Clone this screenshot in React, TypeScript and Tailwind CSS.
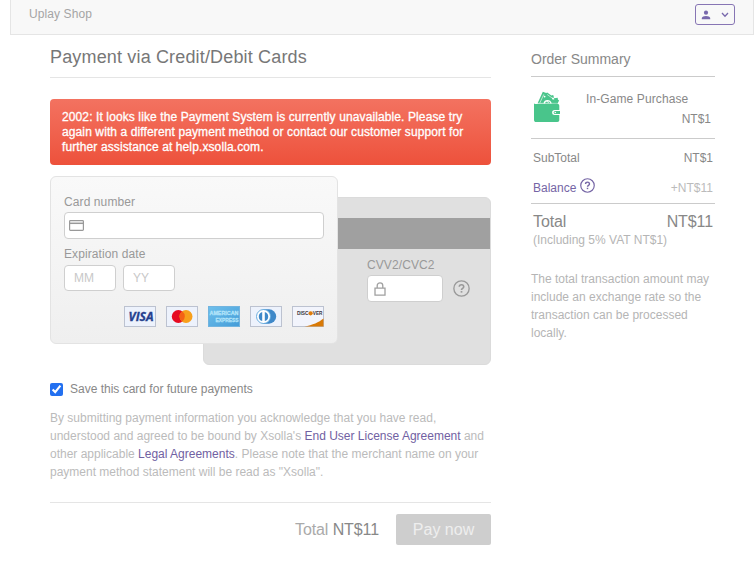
import React, { useState } from "react";

interface IconProps {
  className?: string;
}

interface FieldProps {
  placeholder?: string;
  label: string;
  className: string;
}

const HelpIcon: React.FC<IconProps> = ({ className }) => (
  <svg viewBox="0 0 16 16" fill="none" stroke="currentColor" className={className}>
    <circle cx="8" cy="8" r="7.2" strokeWidth="1.25" />
    <path d="M5.9 6.4c0-2.7 4.2-2.6 4.2 0 0 1.5-2.1 1.5-2.1 3" strokeWidth="1.5" />
    <path d="M8 10.4v1.5" strokeWidth="1.6" />
  </svg>
);

const WalletIcon = () => (
  <svg viewBox="0 0 27 32" className="h-8 w-[27px] text-[#49c58b]" fill="currentColor">
    <path d="M3.5 12.5 8.8.8l3.4 1.3 1-.7 4.2 3.1 1.8-.5 1 3.2 3.5-.4.2 1.8 1.2 1-1.8 3.4z" />
    <path d="m5.800 12 4-8.600M13.200 3.500l7 5" stroke="#fff" strokeWidth=".6" fill="none" />
    <circle cx="10.600" cy="5.600" r=".9" fill="#fff" />
    <circle cx="19" cy="7.600" r="1" fill="#fff" />
    <path d="M9.500 12.500c.4-4.700 7.500-4.300 8.200 0" fill="#fff" />
    <path d="M11 12.500c.5-3 4.900-2.900 5.300 0" />
    <path d="m12.400 10.200 2.500 1.200" stroke="#fff" strokeWidth="1" />
    <path d="M0 12.300c.4.600 1 .800 1.800.800h21.700c1.200 0 1.800.600 1.800 1.800v4.200h-4.500c-2 0-2.700 1-2.700 2.300 0 1.700 1 2.500 2.700 2.500h4.500v5.200c0 1.300-.7 2-2 2H2.200C.8 31.100 0 30.300 0 29z" />
    <path d="M21.200 20H26v3h-4.800a1.500 1.500 0 0 1 0-3z" />
    <circle cx="21.300" cy="21.500" r=".8" fill="#fff" />
    <path d="M2.500 12.300h20.800" stroke="#fff" strokeWidth=".4" />
  </svg>
);

const brandClass = "h-[21px] w-8";

const Visa = () => (
  <svg viewBox="0 0 32 21" className={brandClass}>
    <rect x=".5" y=".5" width="31" height="20" fill="#edf2fc" stroke="#bcc2d0" />
    <text
      x="4.500"
      y="14.800"
      fontSize="11.500"
      fontWeight="bold"
      fontStyle="italic"
      textLength="25"
      lengthAdjust="spacingAndGlyphs"
      fill="#24408e"
      stroke="#24408e"
      strokeWidth=".3"
      fontFamily="Open Sans, sans-serif"
    >
      VISA
    </text>
  </svg>
);

const Mastercard = () => (
  <svg viewBox="0 0 32 21" className={brandClass}>
    <rect x=".5" y=".5" width="31" height="20" fill="#edf2fc" stroke="#bcc2d0" />
    <circle cx="12.300" cy="10.500" r="6.500" fill="#e60b22" />
    <circle cx="20" cy="10.500" r="6.500" fill="#f79f1b" />
    <path d="M16.150 5.260a6.500 6.500 0 0 1 0 10.480 6.500 6.500 0 0 1 0-10.480z" fill="#f46215" />
  </svg>
);

const Amex = () => (
  <svg viewBox="0 0 32 21" className={brandClass}>
    <defs>
      <linearGradient id="amex" x1="0" y1="0" x2="1" y2="1">
        <stop stopColor="#6fc0ec" />
        <stop offset="1" stopColor="#449cd8" />
      </linearGradient>
    </defs>
    <rect x=".5" y=".5" width="31" height="20" fill="url(#amex)" stroke="#72b4df" />
    <g fill="#b4e5fa" stroke="#b4e5fa" strokeWidth=".3" fontFamily="Liberation Sans, sans-serif" fontWeight="bold" fontSize="6">
      <text x="1.500" y="8.500" textLength="29" lengthAdjust="spacingAndGlyphs">AMERICAN</text>
      <text x="7.500" y="15.500" textLength="23" lengthAdjust="spacingAndGlyphs">EXPRESS</text>
    </g>
  </svg>
);

const Diners = () => (
  <svg viewBox="0 0 32 21" className={brandClass}>
    <rect x=".5" y=".5" width="31" height="20" fill="#edf2fc" stroke="#bcc2d0" />
    <path d="M13 3.300h6a7.200 7.200 0 0 1 0 14.400h-6z" fill="#3e88c9" />
    <circle cx="13.500" cy="10.500" r="7" fill="#fff" stroke="#5ba5da" strokeWidth=".9" />
    <path d="M12.200 5.900a4.800 4.800 0 0 0 0 9.200zM14.800 5.900a4.800 4.800 0 0 1 0 9.200z" fill="#3e88c9" />
  </svg>
);

const Discover = () => (
  <svg viewBox="0 0 32 21" className={brandClass}>
    <rect x=".5" y=".5" width="31" height="20" fill="#f2f4fc" stroke="#bcc2d0" />
    <path d="M31.500 12.500v8H12.300c8.500-1.300 14.500-4.300 19.200-8z" fill="#d87906" />
    <g fill="#38343a" fontFamily="Liberation Sans, sans-serif" fontWeight="bold" fontSize="5.500">
      <text x="5" y="9.300" textLength="11.500" lengthAdjust="spacingAndGlyphs">DISC</text>
      <text x="20.800" y="9.300" textLength="9.700" lengthAdjust="spacingAndGlyphs">VER</text>
    </g>
    <circle cx="18.600" cy="7.300" r="2.100" fill="#df7c0b" />
  </svg>
);

const Field: React.FC<FieldProps> = ({ placeholder, label, className }) => (
  <input
    aria-label={label}
    placeholder={placeholder}
    className={`rounded-[4px] border border-[#cfcfcf] bg-white text-[#777] placeholder:text-[#c8c8c8] ${className}`}
  />
);

const Header = () => (
  <header className="ml-2.5 flex h-[35px] items-start justify-between border-x border-b border-[#e5e5e5] bg-[#f8f8f8] px-[18px]">
    <span className="pt-1.5 leading-4 tracking-[0.1px] text-[#a5a5a5]">Uplay Shop</span>
    <button className="mt-1 flex h-[21px] w-10 items-center justify-between rounded-[3px] border border-[#8775b4] px-[5px] text-[#7868ac]">
      <svg viewBox="0 0 10 10" className="size-2.5" fill="currentColor">
        <circle cx="5" cy="2.700" r="2.100" />
        <path d="M.8 9.300V8.100c0-2.900 8.400-2.900 8.400 0v1.200z" />
      </svg>
      <svg viewBox="0 0 8 8" className="size-2" fill="none" stroke="currentColor" strokeWidth="1.300">
        <path d="m1 2 3 3.200L7 2" />
      </svg>
    </button>
  </header>
);

const CardForm = () => (
  <div className="mt-[11px] grid h-[189px]">
    <div className="col-start-1 row-start-1 mt-[21px] ml-[153px] h-42 rounded-[6px] border border-[#dbdbdb] bg-[#e0e0e0] pt-5">
      <div className="h-[31px] bg-[#a0a0a0]" />
      <div className="pt-2 pl-[163px]">
        <p className="leading-4 tracking-[0.1px] text-[#999]">CVV2/CVC2</p>
        <div className="mt-0.5 flex items-center gap-2.5">
          <div className="grid items-center">
            <Field label="CVV2/CVC2" className="col-start-1 row-start-1 h-[27px] w-[76px] pl-7" />
            <svg viewBox="0 0 12 14" className="col-start-1 row-start-1 ml-[7px] h-3.5 w-3" fill="none" stroke="#a0a0a0" strokeWidth="1.300">
              <path d="M1 6.200h10v7H1zM3.200 6V3.700a2.800 2.800 0 0 1 5.600 0V6" />
            </svg>
          </div>
          <HelpIcon className="size-[17px] text-[#999]" />
        </div>
      </div>
    </div>
    <div className="z-10 col-start-1 row-start-1 h-42 w-72 rounded-[6px] border border-[#e3e3e3] bg-linear-to-b from-[#f9f9f9] to-[#efefef] px-[13px] pt-[17px]">
      <p className="leading-4 tracking-[0.1px] text-[#999]">Card number</p>
      <div className="mt-0.5 grid items-center">
        <Field label="Card number" className="col-start-1 row-start-1 h-[27px] w-[260px] pl-7" />
        <svg viewBox="0 0 15 11" className="col-start-1 row-start-1 ml-[5px] h-[11px] w-[15px]" fill="none" stroke="#999" strokeWidth="1.200">
          <rect x=".6" y=".6" width="13.800" height="9.800" rx=".8" />
          <path d="M.6 3.300h13.800" strokeWidth="1.500" />
        </svg>
      </div>
      <p className="mt-[7px] leading-4 tracking-[0.1px] text-[#999]">Expiration date</p>
      <div className="mt-[3px] flex gap-[7px]">
        <Field label="Month" placeholder="MM" className="h-[26px] w-[52px] pl-[9px]" />
        <Field label="Year" placeholder="YY" className="h-[26px] w-[52px] pl-[9px]" />
      </div>
      <div className="mt-[15px] flex justify-end gap-2.5">
        <Visa />
        <Mastercard />
        <Amex />
        <Diners />
        <Discover />
      </div>
    </div>
  </div>
);

const OrderSummary = () => (
  <aside className="w-[184px] pt-4 text-[#888]">
    <h2 className="h-[26px] border-b border-[#cbcbcb] text-sm leading-4">Order Summary</h2>
    <div className="flex h-[62px] border-b border-[#cbcbcb] pt-3.5 pl-[3px]">
      <WalletIcon />
      <div className="flex grow flex-col pl-[25px] leading-4">
        <span className="tracking-[0.1px]">In-Game Purchase</span>
        <span className="mt-1 pr-1 text-right">NT$1</span>
      </div>
    </div>
    <div className="h-[65px] border-b border-[#cbcbcb] px-0.5 pt-[11px] leading-4">
      <div className="flex justify-between">
        <span>SubTotal</span>
        <span>NT$1</span>
      </div>
      <div className="mt-3.5 flex justify-between">
        <span className="flex text-[#7565a5]">
          Balance
          <HelpIcon className="-mt-0.5 ml-1 size-[15px]" />
        </span>
        <span className="text-[#bbb]">+NT$11</span>
      </div>
    </div>
    <div className="flex justify-between px-0.5 pt-2 text-base leading-5 tracking-[-0.1px]">
      <span>Total</span>
      <span>NT$11</span>
    </div>
    <p className="pl-0.5 leading-4 text-[#b5b5b5]">(Including 5% VAT NT$1)</p>
    <p className="mt-[22px] leading-[18px] text-[#b5b5b5]">
      The total transaction amount may
      <br />
      include an exchange rate so the
      <br />
      transaction can be processed
      <br />
      locally.
    </p>
  </aside>
);

export default function App() {
  const [saveCard, setSaveCard] = useState(true);

  return (
    <div className="h-[571px] overflow-hidden bg-white font-['Liberation_Sans',Arial,sans-serif] text-xs whitespace-nowrap">
      <Header />
      <div className="flex gap-10 pl-[50px]">
        <main className="w-[441px]">
          <h1 className="h-[43px] border-b border-[#e5e5e5] pt-3 text-lg leading-5 tracking-[0.16px] text-[#777]">
            Payment via Credit/Debit Cards
          </h1>
          <div className="mt-[21px] h-[66px] rounded-[4px] bg-linear-to-b from-[#f37260] to-[#ed513b] pt-[11px] pl-3 leading-[15px] tracking-[0.11px] text-white [-webkit-text-stroke:0.3px]">
            2002: It looks like the Payment System is currently unavailable. Please try
            <br />
            again with a different payment method or contact our customer support for
            <br />
            further assistance at help.xsolla.com.
          </div>
          <CardForm />
          <label className="mt-4 flex items-center gap-[7px] leading-4 text-[#888]">
            <input
              type="checkbox"
              checked={saveCard}
              onChange={(e) => setSaveCard(e.target.checked)}
              className="size-[13px] accent-[#2370f0]"
            />
            Save this card for future payments
          </label>
          <p className="mt-3 h-[94px] border-b border-[#e5e5e5] leading-[18px] text-[#bbb]">
            By submitting payment information you acknowledge that you have read,
            <br />
            understood and agreed to be bound by Xsolla's{" "}
            <a className="text-[#7161a2]">End User License Agreement</a> and
            <br />
            other applicable <a className="text-[#7161a2]">Legal Agreements</a>. Please note that the merchant name on your
            <br />
            payment method statement will be read as "Xsolla".
          </p>
          <div className="mt-[11px] flex items-center justify-end gap-[17px] text-base">
            <span className="tracking-[-0.1px] text-[#aaa]">
              Total <span className="text-[#888]">NT$11</span>
            </span>
            <button className="h-[31px] w-[95px] rounded-[2px] bg-[#cecece] text-[#eee]">Pay now</button>
          </div>
        </main>
        <OrderSummary />
      </div>
    </div>
  );
}
